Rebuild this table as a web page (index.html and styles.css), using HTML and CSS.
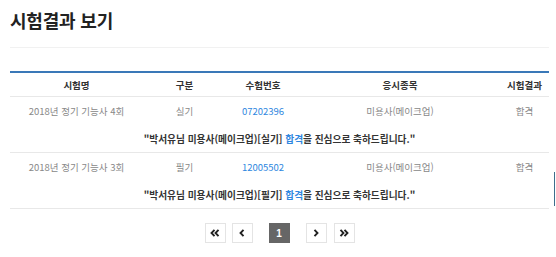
FILE: index.html
```html
<!DOCTYPE html>
<html lang="ko">
<head>
<meta charset="utf-8">
<link rel="stylesheet" href="styles.css">
</head>
<body>
<div class="page">
  <h1 class="title">시험결과 보기</h1>
  <div class="divider"></div>
  <table class="results">
    <colgroup>
      <col class="c1"><col class="c2"><col class="c3"><col class="c4"><col class="c5">
    </colgroup>
    <thead>
      <tr><th>시험명</th><th>구분</th><th>수험번호</th><th>응시종목</th><th>시험결과</th></tr>
    </thead>
    <tbody>
      <tr class="data"><td>2018년 정기 기능사 4회</td><td>실기</td><td class="num">07202396</td><td>미용사(메이크업)</td><td>합격</td></tr>
      <tr class="msg"><td colspan="5">"박서유님 미용사(메이크업)[실기] <span class="pass">합격</span>을 진심으로 축하드립니다."</td></tr>
      <tr class="data"><td>2018년 정기 기능사 3회</td><td>필기</td><td class="num">12005502</td><td>미용사(메이크업)</td><td>합격</td></tr>
      <tr class="msg"><td colspan="5">"박서유님 미용사(메이크업)[필기] <span class="pass">합격</span>을 진심으로 축하드립니다."</td></tr>
    </tbody>
  </table>
  <nav class="pager">
    <a class="pg first"><svg width="10" height="8" viewBox="0 0 10 8"><path d="M4.5 0.8 L1.5 4 L4.5 7.2 M8.5 0.8 L5.5 4 L8.5 7.2" fill="none" stroke="#222" stroke-width="1.9"/></svg></a>
    <a class="pg prev"><svg width="6" height="8" viewBox="0 0 6 8"><path d="M4.5 0.8 L1.5 4 L4.5 7.2" fill="none" stroke="#222" stroke-width="1.9"/></svg></a>
    <a class="pg active">1</a>
    <a class="pg next"><svg width="6" height="8" viewBox="0 0 6 8"><path d="M1.5 0.8 L4.5 4 L1.5 7.2" fill="none" stroke="#222" stroke-width="1.9"/></svg></a>
    <a class="pg last"><svg width="10" height="8" viewBox="0 0 10 8"><path d="M1.5 0.8 L4.5 4 L1.5 7.2 M5.5 0.8 L8.5 4 L5.5 7.2" fill="none" stroke="#222" stroke-width="1.9"/></svg></a>
  </nav>
</div>
<div class="edge-bar"></div>
</body>
</html>
```
FILE: styles.css
```css
html, body {
  margin: 0;
  padding: 0;
  background: #fff;
}
body {
  font-family: "Noto Sans CJK KR", "Noto Sans", sans-serif;
  color: #333;
}
.page {
  width: 539px;
  padding: 0 0 0 10px;
}
.title {
  margin: 0;
  padding-top: 7px;
  height: 40px;
  box-sizing: border-box;
  font-size: 18px;
  line-height: 26px;
  font-weight: 700;
  color: #222;
  letter-spacing: -0.2px;
}
.divider {
  height: 1px;
  background: #f1f1f1;
  margin-top: 7px;
}
.results {
  width: 539px;
  margin-top: 23px;
  border-collapse: collapse;
  table-layout: fixed;
  border-top: 2px solid #3a78b8;
  font-size: 9.5px;
}
.c1 { width: 133px; }
.c2 { width: 83px; }
.c3 { width: 74px; }
.c4 { width: 200px; }
.c5 { width: 49px; }
.results th {
  height: 23px;
  padding: 0;
  font-weight: 700;
  color: #333;
  border-bottom: 1px solid #e8e8e8;
  text-align: center;
}
.results td {
  padding: 0;
  text-align: center;
}
.data td {
  height: 28px;
  color: #888;
}
.data td.num {
  color: #2f87e0;
}
.msg td {
  height: 27px;
  font-size: 9.7px;
  font-weight: 700;
  color: #333;
  border-bottom: 1px solid #e8e8e8;
}
.pass {
  color: #2f87e0;
}
.pager {
  display: flex;
  justify-content: center;
  align-items: center;
  margin-top: 14px;
}
.pg {
  box-sizing: border-box;
  width: 21px;
  height: 20px;
  border: 1px solid #e4e4e4;
  background: #fff;
  display: flex;
  align-items: center;
  justify-content: center;
  font-family: "Liberation Sans", sans-serif;
  font-size: 10px;
  font-weight: 700;
}
.first { margin-right: 6px; }
.prev { margin-right: 16px; }
.active {
  background: #666;
  border-color: #666;
  color: #fff;
  margin-right: 16px;
}
.next { margin-right: 7px; }
.edge-bar {
  position: absolute;
  left: 554px;
  top: 172px;
  width: 1px;
  height: 34px;
  background: #3d6e8c;
}
```
